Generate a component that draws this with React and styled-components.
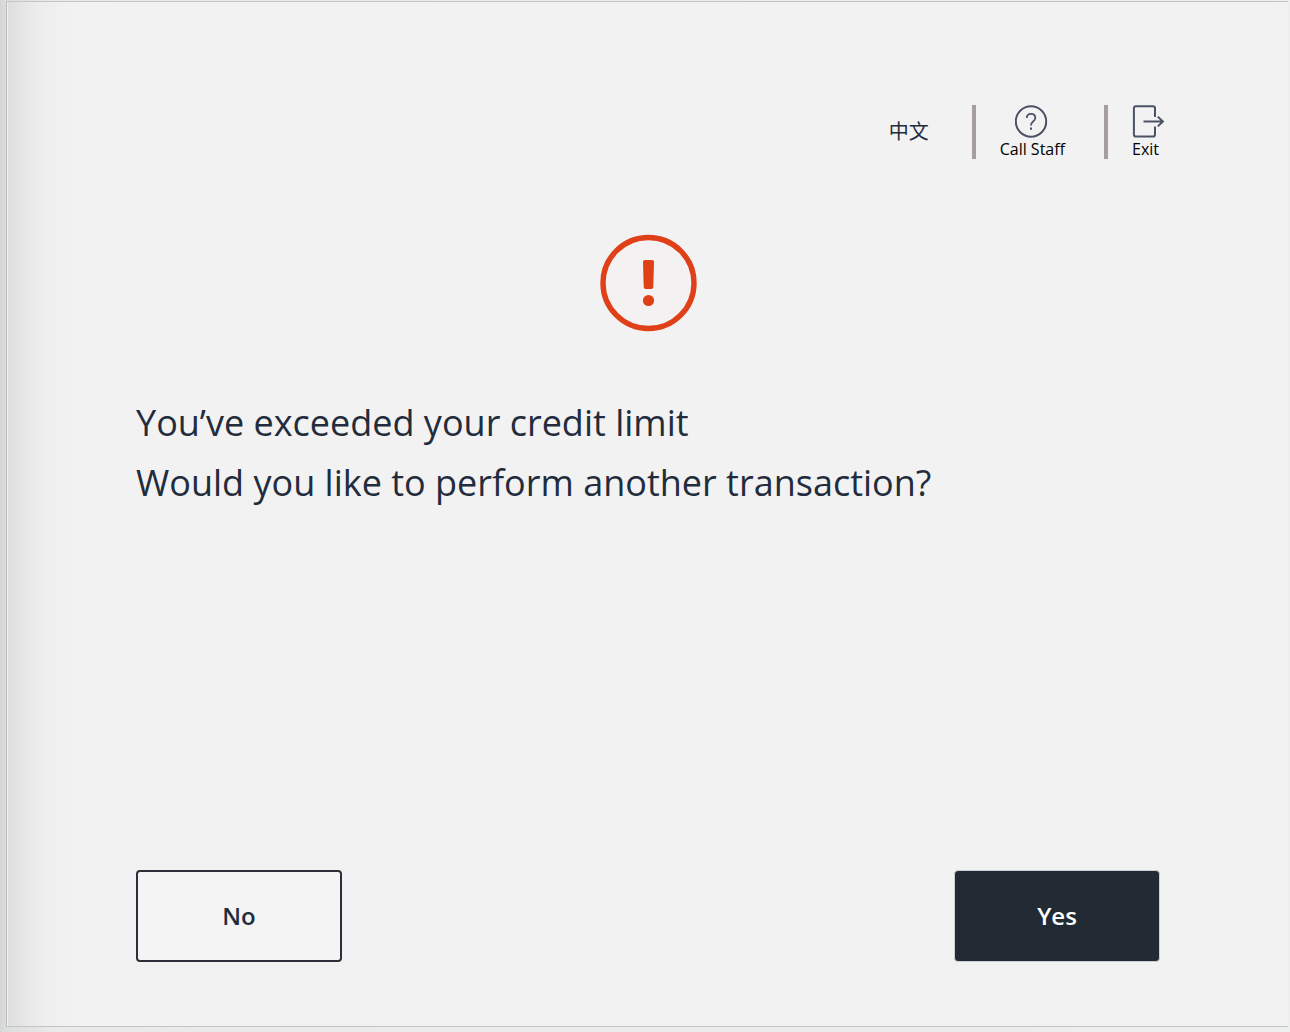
import React from 'react';
import styled, { createGlobalStyle } from 'styled-components';

const GlobalStyle = createGlobalStyle`
  * {
    box-sizing: border-box;
  }
  body {
    margin: 0;
    background: #ebecec;
    font-family: 'Open Sans', 'Noto Sans CJK SC', sans-serif;
    color: #222c3c;
  }
`;

const Page = styled.div`
  min-height: 100vh;
  display: flex;
  padding: 1px 2px 5px 6px;
  background: linear-gradient(to right, #d3d6d5 0, #dcdedd 6px, #e9ebea 56px, #edeeee 100%);
`;

const Screen = styled.div`
  flex: 1;
  display: flex;
  flex-direction: column;
  padding: 103px 128px 64px 129px;
  border: 1px solid #c4c4c4;
  border-left-color: #bbbbbb;
  border-right: 0;
  background: linear-gradient(to right, #f1f1f1 0, #f1f1f1 1px, #dedede 1px, #e6e6e6 16px, #eeeeee 36px, #f2f2f2 66px);
`;

const Toolbar = styled.nav`
  display: flex;
  justify-content: flex-end;
  height: 54px;
  margin-right: -6px;
`;

const ToolButton = styled.button`
  display: flex;
  flex-direction: column;
  align-items: ${({ $align }) => $align || 'center'};
  padding: 0;
  border: 0;
  background: none;
  font: 16px/22px 'Open Sans', sans-serif;
  color: #000000;
  cursor: pointer;

  svg {
    display: block;
    flex: none;
  }
`;

const LanguageButton = styled(ToolButton)`
  justify-content: center;
  padding-bottom: 2px;
  font: 20px/24px 'Noto Sans CJK SC', sans-serif;
  color: #222c3c;
`;

const Divider = styled.span`
  width: 4px;
  margin: 0 24px 0 ${({ $before }) => $before}px;
  background: #a59e9e;
`;

const Message = styled.main`
  display: flex;
  flex-direction: column;
  flex: 1;
  padding-top: 75px;
`;

const AlertIcon = styled.svg`
  display: block;
  align-self: center;
  width: 98px;
  height: 98px;
`;

const Prompt = styled.p`
  margin: 61px 0;
  font-size: 36px;
  line-height: 60px;
`;

const Line = styled.span`
  display: block;
`;

const Actions = styled.footer`
  display: flex;
  justify-content: space-between;
`;

const ActionButton = styled.button`
  width: 206px;
  height: 92px;
  border: ${({ $primary }) => ($primary ? '1px solid #cbd0d8' : '2px solid #2c2f3a')};
  border-radius: 4px;
  background: ${({ $primary }) => ($primary ? '#222a33' : '#f4f4f4')};
  color: ${({ $primary }) => ($primary ? '#ffffff' : '#222c3c')};
  font: 600 24px/32px 'Open Sans', sans-serif;
  cursor: pointer;
`;

const HelpIcon = () => (
  <svg width="34" height="33" viewBox="0 0 34 33" fill="none" stroke="#4b5266" strokeWidth="2" aria-hidden="true">
    <circle cx="16" cy="16.5" r="15.2" />
    <path d="M11.800 13c0-2.600 1.700-4.100 4.200-4.100s4.300 1.500 4.300 3.900c0 1.900-1 2.900-2.400 4-1.400 1.100-1.900 1.800-1.900 3.700" strokeWidth="1.800" />
    <path d="M16 22.600v2.200" />
  </svg>
);

const ExitIcon = () => (
  <svg width="34" height="33" viewBox="0 0 34 33" fill="none" stroke="#4b5266" strokeWidth="2" aria-hidden="true">
    <path d="M23 12V3.300Q23 1.200 20.900 1.200H4Q1.900 1.200 1.900 3.300V29.500Q1.900 31.600 4 31.600H20.900Q23 31.600 23 29.500V21.500" />
    <path d="M11.500 16.500H30.500M25.800 11.600L30.900 16.500L25.800 21.400" />
  </svg>
);

export default function App() {
  return (
    <>
      <GlobalStyle />
      <Page>
        <Screen>
          <Toolbar aria-label="Terminal options">
            <LanguageButton type="button" lang="zh">中文</LanguageButton>
            <Divider $before={43} />
            <ToolButton type="button">
              <HelpIcon />
              Call Staff
            </ToolButton>
            <Divider $before={39} />
            <ToolButton type="button" $align="flex-start">
              <ExitIcon />
              Exit
            </ToolButton>
          </Toolbar>
          <Message>
            <AlertIcon viewBox="0 0 98 98" role="img" aria-label="Warning">
              <circle cx="49.500" cy="49" r="45.500" fill="#f3f1f2" stroke="#e04018" strokeWidth="5.400" />
              <path d="M46 26h7q2 0 2 2l-.7 25q-.1 2-2 2h-5.600q-1.900 0-2-2l-.7-25q0-2 2-2z" fill="#e04018" />
              <circle cx="49.500" cy="66.500" r="5.600" fill="#e04018" />
            </AlertIcon>
            <Prompt>
              <Line>You’ve exceeded your credit limit</Line>
              <Line>Would you like to perform another transaction?</Line>
            </Prompt>
          </Message>
          <Actions>
            <ActionButton type="button">No</ActionButton>
            <ActionButton type="button" $primary>Yes</ActionButton>
          </Actions>
        </Screen>
      </Page>
    </>
  );
}
